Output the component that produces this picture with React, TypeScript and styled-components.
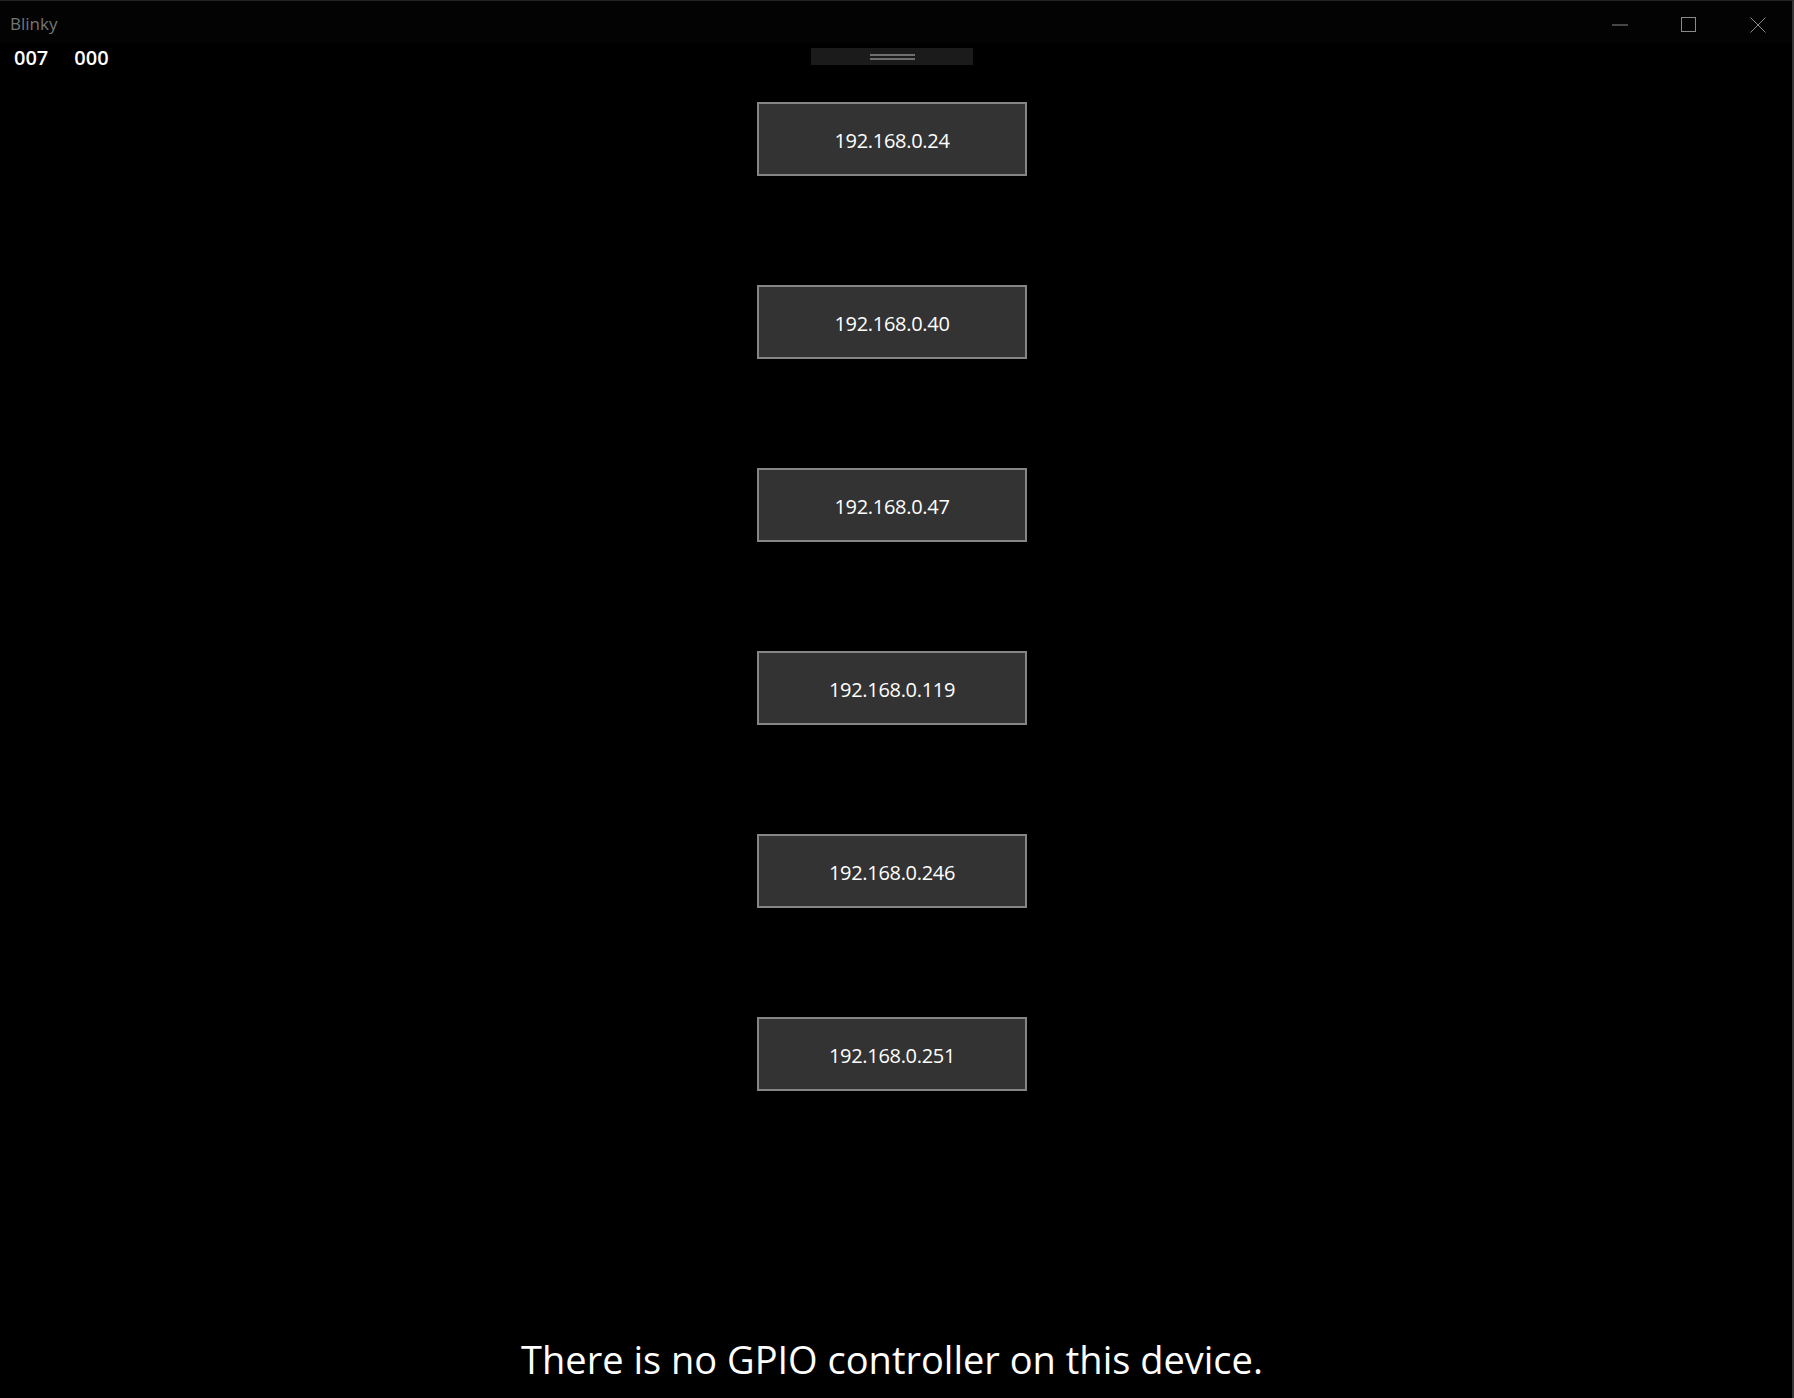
import React from "react";
import styled, { createGlobalStyle } from "styled-components";

const GlobalStyle = createGlobalStyle`
  html, body {
    margin: 0;
    padding: 0;
    background: #000;
  }
  body {
    font-family: "Open Sans", "Noto Sans", sans-serif;
    color: #fff;
  }
`;

const devices = [
  "192.168.0.24",
  "192.168.0.40",
  "192.168.0.47",
  "192.168.0.119",
  "192.168.0.246",
  "192.168.0.251",
];

const App: React.FC = () => {
  return (
    <>
      <GlobalStyle />
      <Window>
        <TitleBar>
          <Title>Blinky</Title>
          <Controls>
            <ControlButton aria-label="Minimize">
              <svg width="16" height="16" viewBox="0 0 16 16">
                <line x1="0" y1="8" x2="16" y2="8" stroke="#8a8a8a" strokeWidth="1" />
              </svg>
            </ControlButton>
            <ControlButton aria-label="Maximize">
              <svg width="16" height="16" viewBox="0 0 16 16">
                <rect x="0.5" y="0.5" width="14" height="14" fill="none" stroke="#8a8a8a" strokeWidth="1" />
              </svg>
            </ControlButton>
            <ControlButton aria-label="Close">
              <svg width="16" height="16" viewBox="0 0 16 16">
                <path d="M0.5 0.5 L15.5 15.5 M15.5 0.5 L0.5 15.5" stroke="#8a8a8a" strokeWidth="1" />
              </svg>
            </ControlButton>
          </Controls>
        </TitleBar>
        <Content>
          <TopRow>
            <Counters>
              <Counter>007</Counter>
              <Counter>000</Counter>
            </Counters>
            <Handle>
              <Grip />
              <Grip />
            </Handle>
            <div />
          </TopRow>
          <DeviceList>
            {devices.map((ip) => (
              <DeviceButton key={ip}>{ip}</DeviceButton>
            ))}
          </DeviceList>
          <Status>There is no GPIO controller on this device.</Status>
        </Content>
      </Window>
    </>
  );
};

export default App;

const Window = styled.div`
  width: 1794px;
  height: 1398px;
  box-sizing: border-box;
  border-top: 1px solid #222;
  border-right: 2px solid #363636;
  background: #000;
  display: flex;
  flex-direction: column;
  overflow: hidden;
`;

const TitleBar = styled.div`
  height: 41px;
  display: flex;
  align-items: flex-start;
  justify-content: space-between;
  background: #030303;
`;

const Title = styled.div`
  padding: 11px 0 0 10px;
  font-size: 17px;
  line-height: 24px;
  color: #767676;
`;

const Controls = styled.div`
  display: flex;
`;

const ControlButton = styled.div`
  width: 69px;
  height: 41px;
  display: flex;
  justify-content: center;
  padding-top: 16px;
  box-sizing: border-box;
`;

const Content = styled.div`
  flex: 1;
  display: flex;
  flex-direction: column;
  padding-right: 8px;
`;

const TopRow = styled.div`
  display: grid;
  grid-template-columns: 1fr 162px 1fr;
  height: 26px;
`;

const Counters = styled.div`
  display: flex;
  gap: 26px;
  padding: 4px 0 0 14px;
`;

const Counter = styled.span`
  font-size: 20px;
  font-weight: 600;
  line-height: 24px;
  color: #fff;
`;

const Handle = styled.div`
  margin-top: 6px;
  height: 17px;
  background: #1b1b1b;
  display: flex;
  flex-direction: column;
  align-items: center;
  justify-content: center;
  gap: 2px;
`;

const Grip = styled.div`
  width: 45px;
  height: 2px;
  background: #6e6e6e;
`;

const DeviceList = styled.div`
  margin-top: 34px;
  display: flex;
  flex-direction: column;
  align-items: center;
  gap: 109px;
`;

const DeviceButton = styled.div`
  width: 270px;
  height: 74px;
  box-sizing: border-box;
  padding-top: 2px;
  background: #333;
  border: 2px solid #858585;
  display: flex;
  align-items: center;
  justify-content: center;
  font-size: 20px;
  letter-spacing: -0.3px;
  color: #fff;
`;

const Status = styled.div`
  margin-top: auto;
  padding-bottom: 12px;
  text-align: center;
  font-size: 38px;
  line-height: 54px;
  color: #fff;
`;
